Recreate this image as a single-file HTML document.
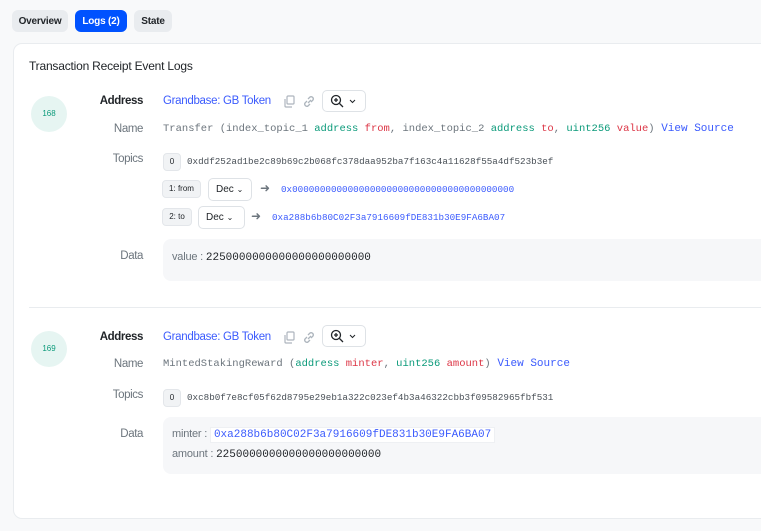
<!DOCTYPE html>
<html><head><meta charset="utf-8"><style>
*{box-sizing:border-box;margin:0;padding:0}
body{width:761px;height:531px;background:#f8f9fa;font-family:"Liberation Sans",sans-serif;position:relative;overflow:hidden;color:#212529}
.a{position:absolute;white-space:nowrap}
.tab{position:absolute;top:10px;height:22px;border-radius:6px;background:#e9ecef;font-size:10px;font-weight:bold;line-height:23px;text-align:center;color:#212529;letter-spacing:-0.2px}
.card{position:absolute;left:13px;top:43px;width:800px;height:476px;background:#fff;border:1px solid #e9ecef;border-radius:9px}
.circ{position:absolute;left:31px;width:36px;height:36px;border-radius:50%;background:#e6f5f2;color:#0b9a7a;font-size:8px;text-align:center;line-height:36px}
.lab{position:absolute;right:618px;font-size:11.5px;letter-spacing:-0.4px;color:#6c757d}
.lab.b{color:#212529;font-weight:bold}
.mono{font-family:"Liberation Mono",monospace}
.link{color:#3b5bfd}
.g{color:#0b9a7a}.r{color:#dc3545}.gr{color:#6c757d}
.chip{position:absolute;height:18px;border-radius:4px;background:#f1f3f5;border:1px solid #e3e6ea;font-size:8px;line-height:16px;text-align:center;color:#212529}
.sel{position:absolute;height:23px;border-radius:5px;border:1px solid #dee2e6;background:#fff;font-size:10px;line-height:21px;padding-left:7px;color:#212529}
.zb{position:absolute;width:44px;height:22px;border:1px solid #dee2e6;border-radius:5px;background:#fff}
.box{position:absolute;left:163px;width:620px;background:#f6f7f9;border-radius:8px}
.gl{font-size:11.5px;letter-spacing:-0.3px}
</style></head><body>
<div class="tab" style="left:12px;width:56px">Overview</div>
<div class="tab" style="left:75px;width:52px;background:#0052ff;color:#fff">Logs (2)</div>
<div class="tab" style="left:134px;width:38px">State</div>
<div class="card"></div>
<div class="a" style="left:29px;top:59px;font-size:12px;letter-spacing:-0.2px">Transaction Receipt Event Logs</div>

<div class="circ" style="top:96px">168</div>
<div class="lab b" style="top:95px">Address</div>
<div class="a link gl" style="left:163px;top:95px">Grandbase: GB Token</div>
<svg class="a" style="left:283px;top:95px" width="12" height="13" viewBox="0 0 12 13" fill="none" stroke="#adb5bd" stroke-width="1.2"><rect x="4" y="1" width="7" height="8" rx="1"/><path d="M2 4v7a1 1 0 0 0 1 1h6"/></svg>
<svg class="a" style="left:302px;top:95px" width="14" height="13" viewBox="0 0 14 13" fill="none" stroke="#adb5bd" stroke-width="1.3"><path d="M6 8l3-3"/><path d="M5 6L3 8a2.2 2.2 0 0 0 3 3l2-2"/><path d="M9 7l2-2a2.2 2.2 0 0 0-3-3L6 4"/></svg>
<div class="zb" style="left:322px;top:90px"><svg class="a" style="left:7px;top:3px" width="30" height="14" viewBox="0 0 30 14" fill="none" stroke="#212529" stroke-width="1.3"><circle cx="6" cy="6" r="4.5"/><path d="M9.5 9.5L13 13M6 4v4M4 6h4"/><path d="M20 6l2.5 2.5L25 6" stroke-width="1"/></svg></div>
<div class="lab" style="top:123px">Name</div>
<div class="a mono" style="left:163px;top:123px;font-size:10.5px;color:#6c757d">Transfer (index_topic_1 <span class="g">address</span> <span class="r">from</span>, index_topic_2 <span class="g">address</span> <span class="r">to</span>, <span class="g">uint256</span> <span class="r">value</span>)<span class="link" style="font-size:11px"> View Source</span></div>
<div class="lab" style="top:153px">Topics</div>
<div class="chip" style="left:163px;top:153px;width:18px">0</div>
<div class="a mono" style="left:187px;top:156px;font-size:9.25px;color:#495057">0xddf252ad1be2c89b69c2b068fc378daa952ba7f163c4a11628f55a4df523b3ef</div>
<div class="chip" style="left:162px;top:180px;width:39px">1: from</div>
<div class="sel" style="left:208px;top:178px;width:44px">Dec <span style="font-size:8px">&#8964;</span></div>
<div class="a" style="left:260px;top:181px;font-size:12px;color:#6c757d">&#10140;</div>
<div class="a mono link" style="left:281px;top:184px;font-size:9.25px">0x0000000000000000000000000000000000000000</div>
<div class="chip" style="left:162px;top:208px;width:30px">2: to</div>
<div class="sel" style="left:198px;top:206px;width:47px">Dec <span style="font-size:8px">&#8964;</span></div>
<div class="a" style="left:251px;top:209px;font-size:12px;color:#6c757d">&#10140;</div>
<div class="a mono link" style="left:272px;top:212px;font-size:9.25px">0xa288b6b80C02F3a7916609fDE831b30E9FA6BA07</div>
<div class="lab" style="top:250px">Data</div>
<div class="box" style="top:239px;height:42px"></div>
<div class="a" style="left:172px;top:251px;font-size:11px;color:#6c757d;letter-spacing:-0.2px">value : <span class="mono" style="color:#212529;letter-spacing:0">2250000000000000000000000</span></div>

<div style="position:absolute;left:29px;top:307px;width:740px;height:1px;background:#e9ecef"></div>

<div class="circ" style="top:331px">169</div>
<div class="lab b" style="top:331px">Address</div>
<div class="a link gl" style="left:163px;top:331px">Grandbase: GB Token</div>
<svg class="a" style="left:283px;top:331px" width="12" height="13" viewBox="0 0 12 13" fill="none" stroke="#adb5bd" stroke-width="1.2"><rect x="4" y="1" width="7" height="8" rx="1"/><path d="M2 4v7a1 1 0 0 0 1 1h6"/></svg>
<svg class="a" style="left:302px;top:331px" width="14" height="13" viewBox="0 0 14 13" fill="none" stroke="#adb5bd" stroke-width="1.3"><path d="M6 8l3-3"/><path d="M5 6L3 8a2.2 2.2 0 0 0 3 3l2-2"/><path d="M9 7l2-2a2.2 2.2 0 0 0-3-3L6 4"/></svg>
<div class="zb" style="left:322px;top:325px"><svg class="a" style="left:7px;top:3px" width="30" height="14" viewBox="0 0 30 14" fill="none" stroke="#212529" stroke-width="1.3"><circle cx="6" cy="6" r="4.5"/><path d="M9.5 9.5L13 13M6 4v4M4 6h4"/><path d="M20 6l2.5 2.5L25 6" stroke-width="1"/></svg></div>
<div class="lab" style="top:358px">Name</div>
<div class="a mono" style="left:163px;top:358px;font-size:10.5px;color:#6c757d">MintedStakingReward (<span class="g">address</span> <span class="r">minter</span>, <span class="g">uint256</span> <span class="r">amount</span>)<span class="link" style="font-size:11px"> View Source</span></div>
<div class="lab" style="top:389px">Topics</div>
<div class="chip" style="left:163px;top:389px;width:18px">0</div>
<div class="a mono" style="left:187px;top:392px;font-size:9.25px;color:#495057">0xc8b0f7e8cf05f62d8795e29eb1a322c023ef4b3a46322cbb3f09582965fbf531</div>
<div class="lab" style="top:428px">Data</div>
<div class="box" style="top:417px;height:57px"></div>
<div class="a" style="left:172px;top:428px;font-size:11px;color:#6c757d;letter-spacing:-0.2px">minter : <span class="mono link" style="background:#fff;border:1px solid #eef0f3;padding:1px 3px;letter-spacing:0">0xa288b6b80C02F3a7916609fDE831b30E9FA6BA07</span></div>
<div class="a" style="left:172px;top:448px;font-size:11px;color:#6c757d;letter-spacing:-0.2px">amount : <span class="mono" style="color:#212529;letter-spacing:0">2250000000000000000000000</span></div>
</body></html>
